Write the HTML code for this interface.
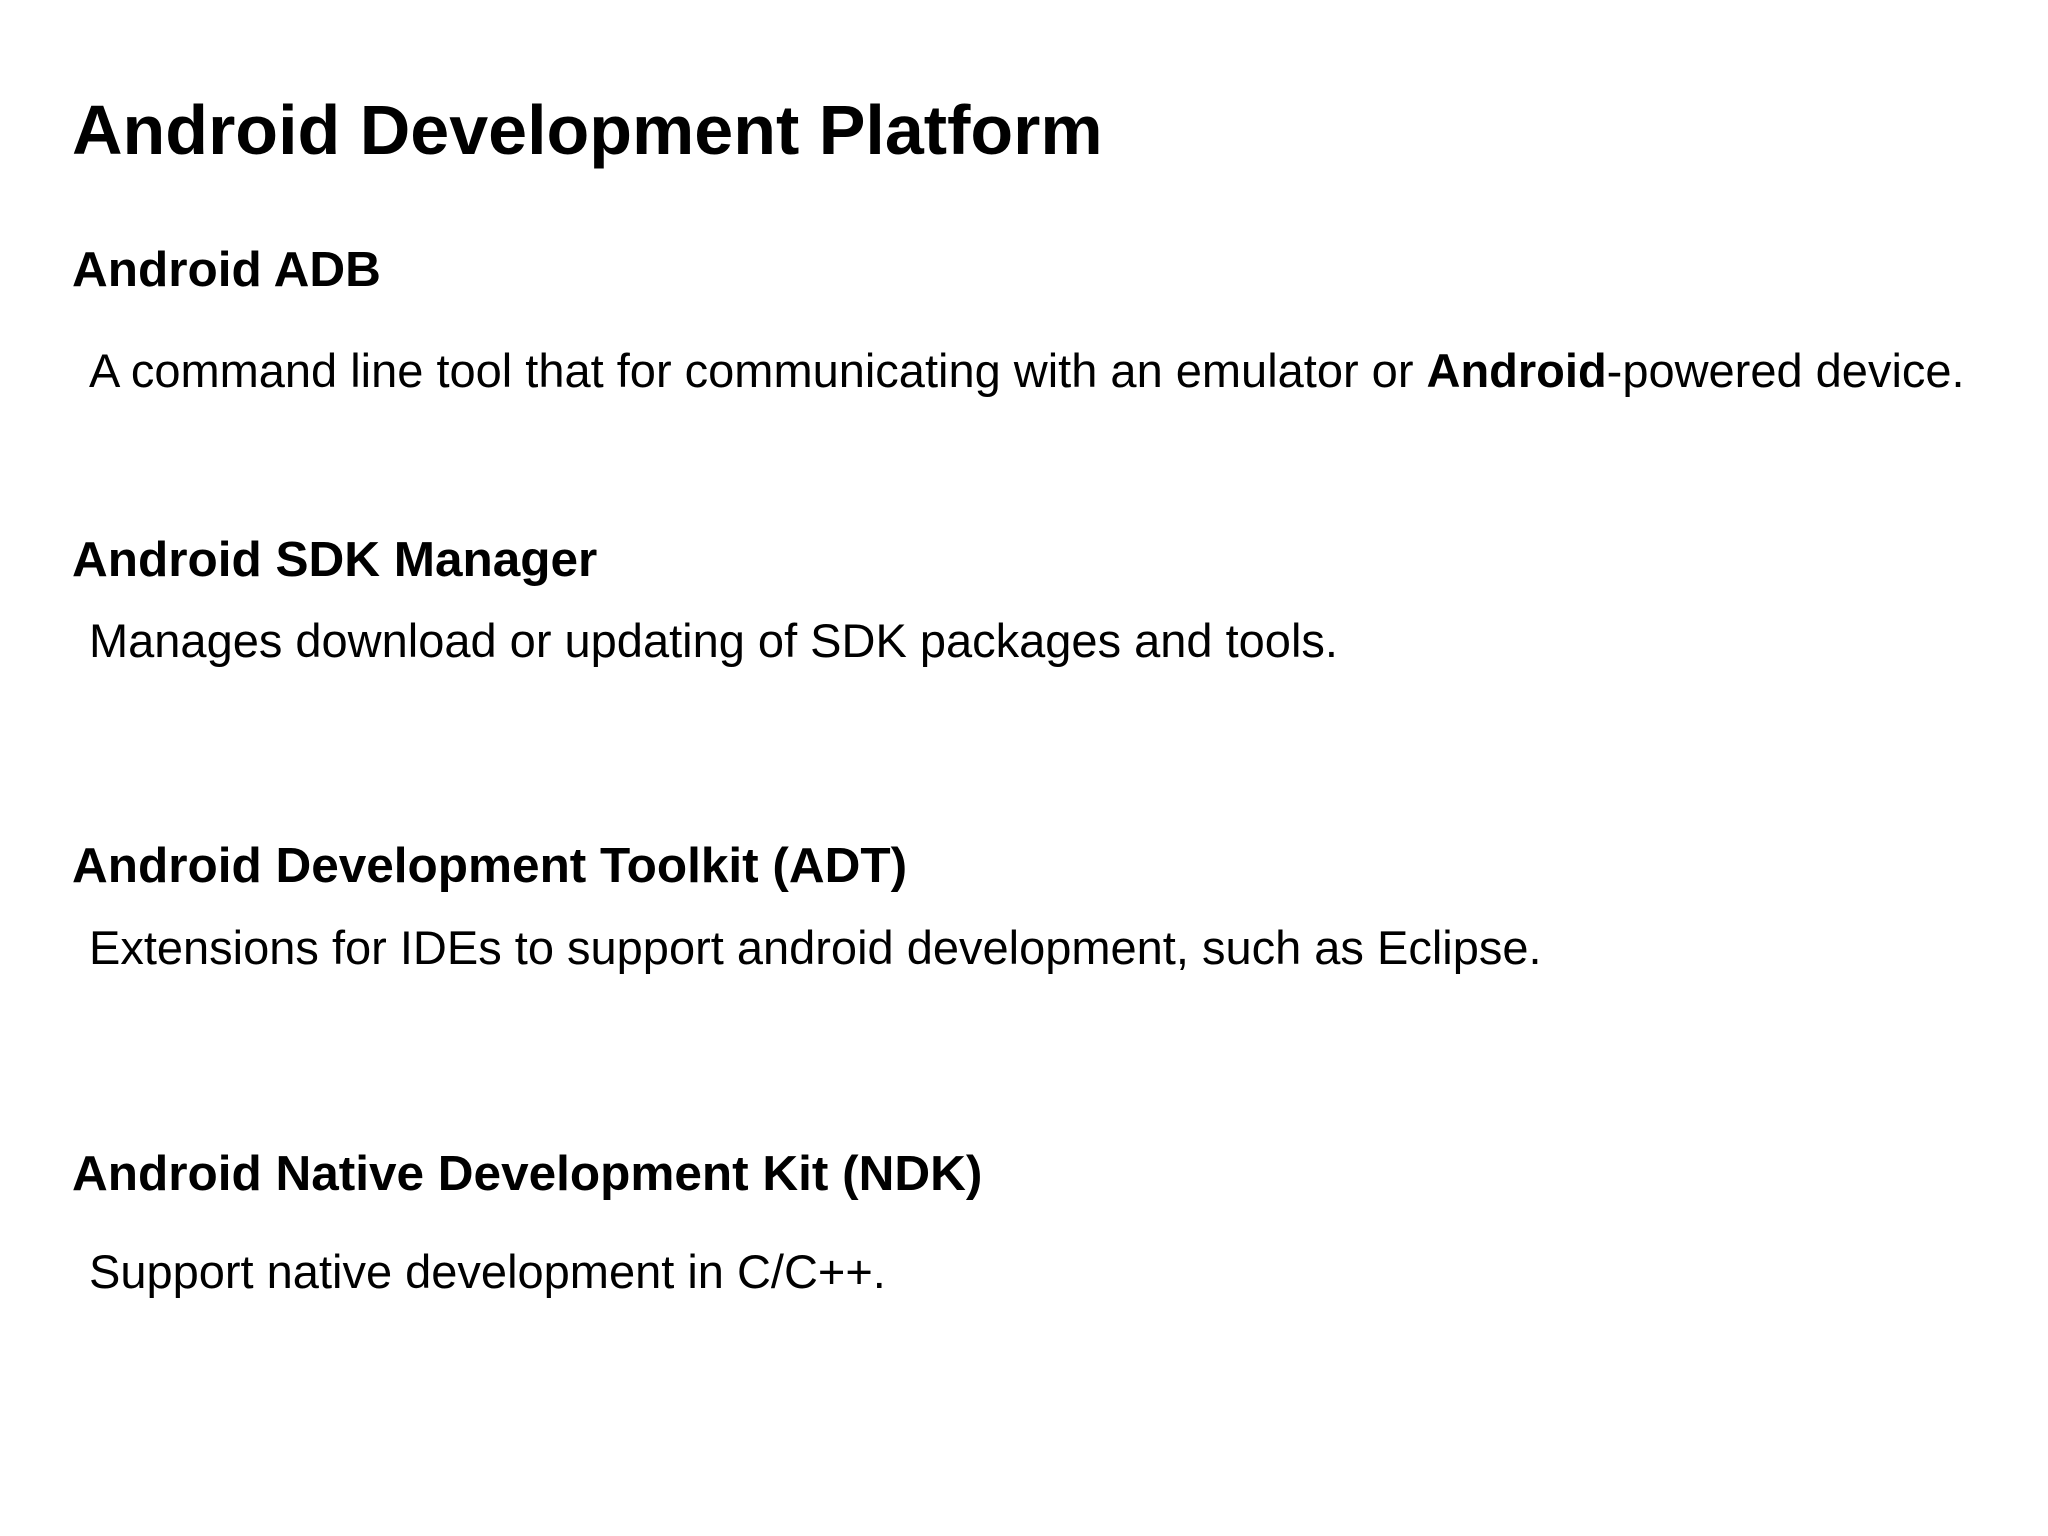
<!DOCTYPE html>
<html><head><meta charset="utf-8"><style>
html,body{margin:0;padding:0;background:#fff;}
body{width:2048px;height:1536px;position:relative;overflow:hidden;font-family:"Liberation Sans",sans-serif;color:#000;}
div{position:absolute;line-height:1;white-space:nowrap;}
.t{left:72px;top:95px;font-size:70px;font-weight:bold;}
.h{left:72px;font-size:49.5px;font-weight:bold;}
.b{left:89px;font-size:47px;}
</style></head><body>
<div class="t">Android Development Platform</div>
<div class="h" style="top:245px">Android ADB</div>
<div class="b" style="top:347px">A command line tool that for communicating with an emulator or <b>Android</b>-powered device.</div>
<div class="h" style="top:535px">Android SDK Manager</div>
<div class="b" style="top:617px">Manages download or updating of SDK packages and tools.</div>
<div class="h" style="top:841px">Android Development Toolkit (ADT)</div>
<div class="b" style="top:924px">Extensions for IDEs to support android development, such as Eclipse.</div>
<div class="h" style="top:1149px">Android Native Development Kit (NDK)</div>
<div class="b" style="top:1248px">Support native development in C/C++.</div>
</body></html>
